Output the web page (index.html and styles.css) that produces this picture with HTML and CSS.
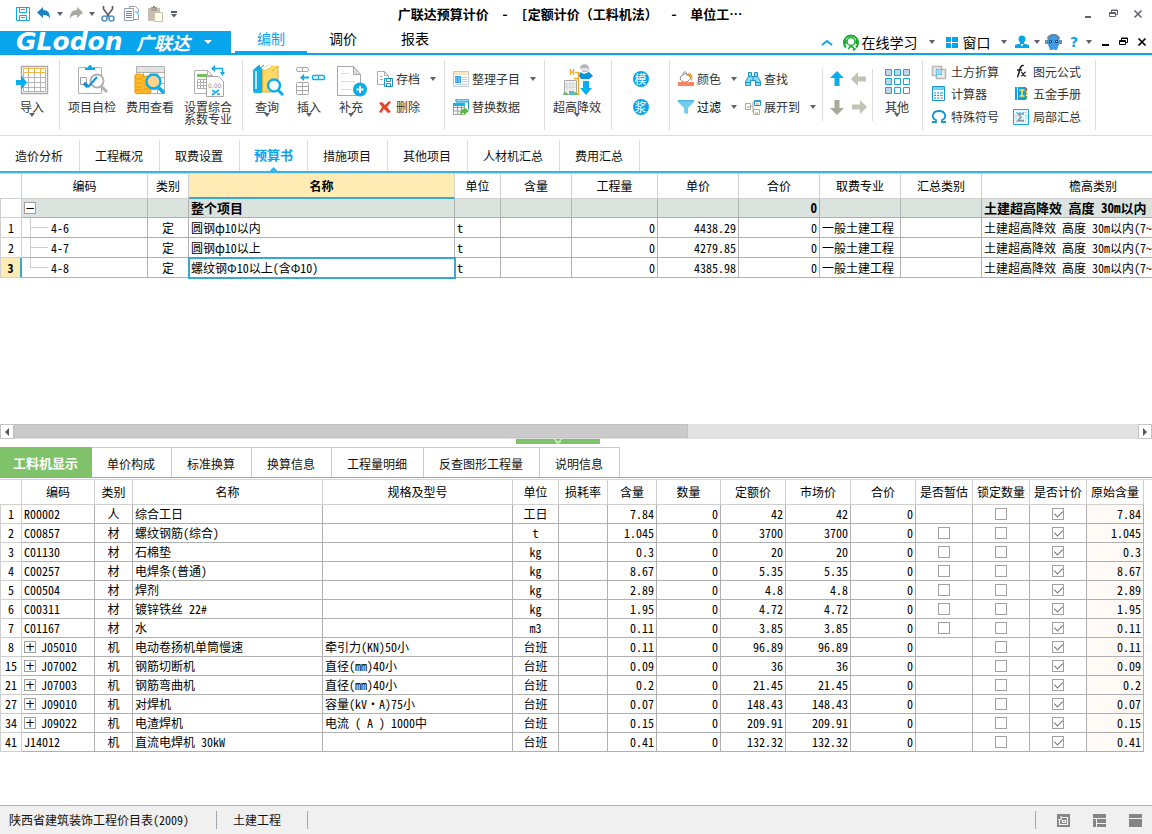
FILE: index.html
```html
<!DOCTYPE html>
<html lang="zh-CN">
<head>
<meta charset="utf-8">
<title>广联达预算计价</title>
<link rel="stylesheet" href="styles.css">
</head>
<body>
<header class="titlebar">
  <div class="quick">
    <button aria-label="保存"><svg width="16" height="16" viewBox="0 0 16 16" fill="none" stroke="#12a9e0"><path d="M1.500 1.500h13v13h-13z"/><path d="M4.500 1.500v5h7v-5M4.500 14.500v-5h7v5M6 11.500h4M6 3.500h4"/></svg></button>
    <button aria-label="撤销"><svg width="14" height="14" viewBox="0 0 14 14"><path d="M6 0v3c5 0 7 3 7 9-1-3-3-4-7-4v3L0 5.500z" fill="#1a84c8"/></svg></button>
    <button aria-label="撤销列表"><i class="caret"></i></button>
    <button aria-label="重做"><svg width="14" height="14" viewBox="0 0 14 14"><path d="M8 0v3C3 3 1 6 1 12c1-3 3-4 7-4v3l6-5.500z" fill="#a9a9a0"/></svg></button>
    <button aria-label="重做列表"><i class="caret"></i></button>
    <button aria-label="剪切"><svg width="14" height="16" viewBox="0 0 14 16" fill="none"><path d="M2.500 0v3l6 8M11.500 0v3l-6 8" stroke="#5b5b66" stroke-width="1.600"/><circle cx="3.500" cy="12.500" r="2.500" stroke="#5594c4" stroke-width="1.600"/><circle cx="10.500" cy="12.500" r="2.500" stroke="#5594c4" stroke-width="1.600"/></svg></button>
    <button aria-label="复制"><svg width="16" height="16" viewBox="0 0 16 16" fill="#fff"><path d="M5.500.5h6l3 3v10h-9z" stroke="#9d9d9d"/><path d="M.5 2.500h9v12h-9z" stroke="#8fa3ad"/><path d="M2 5.500h6M2 7.500h6M2 9.500h6M2 11.500h6" stroke="#12a9e0"/><path d="M10 5h5v5z" fill="#8cd8f2"/></svg></button>
    <button aria-label="粘贴"><svg width="16" height="16" viewBox="0 0 16 16"><path d="M0 2h12v13H0z" fill="#c6bfb2"/><path d="M3 1h6v4H3z" fill="#a9a398"/><path d="M5 0h2v2H5z" fill="#8d887e"/><path d="M6.500 6.500h8v9h-8z" fill="#fffdf0" stroke="#c9c3a4"/></svg></button>
    <button aria-label="更多"><svg width="6" height="8" viewBox="0 0 6 8" fill="#5a5a66"><path d="M0 1h6v2H0zM0 4h6L3 7.500z"/></svg></button>
  </div>
  <h1 class="title">广联达预算计价&nbsp; - &nbsp;[定额计价（工料机法）&nbsp; - &nbsp;单位工…</h1>
  <div class="winbtns">
    <button aria-label="最小化"><svg width="12" height="12" viewBox="0 0 12 12"><path d="M3 8h6v2H3z" fill="#62626e"/></svg></button>
    <button aria-label="还原"><svg width="10" height="10" viewBox="0 0 10 10" fill="none" stroke="#62626e"><path d="M2.500 3V1h6v4.500H7M2.500 1.500h6M.5 3.500h6v4h-6zM.5 4.500h6"/></svg></button>
    <button aria-label="关闭"><svg width="10" height="10" viewBox="0 0 10 10"><path d="M1.500 1.500l7 7M8.500 1.500l-7 7" stroke="#62626e" stroke-width="1.600"/></svg></button>
  </div>
</header>

<nav class="menubar">
  <button class="brand"><span class="wordmark">GLodon</span><span class="brandcn">广联达</span><svg width="8" height="4" viewBox="0 0 8 4"><path d="M0 0h8L4 4z" fill="#fff"/></svg></button>
  <div class="menus"><button class="menu on">编制</button><button class="menu">调价</button><button class="menu">报表</button></div>
  <div class="tools">
    <button aria-label="收起"><svg width="12" height="7" viewBox="0 0 12 7"><path d="M1 6l5-4 5 4" fill="none" stroke="#12a9e0" stroke-width="2"/></svg></button>
    <button class="study"><svg width="16" height="17" viewBox="0 0 16 17" fill="none" stroke="#18ab30"><path d="M3 13.500A7 7 0 1 1 13 13.500" stroke-width="2"/><circle cx="8" cy="7.500" r="4" stroke-width="1.500"/><path d="M2.500 6v4M13.500 6v4" stroke-width="2"/><path d="M5 15l3-3 4 3-2 1.500" stroke-width="1.600"/></svg>在线学习</button>
    <button aria-label="学习列表"><i class="caret"></i></button>
    <button class="study windows"><svg width="12" height="12" viewBox="0 0 12 12"><path d="M0 1h5v5H0zM6 1h6v5H6zM0 7h5v5H0zM6 7h6v5H6z" fill="#08a5ec"/></svg>窗口</button>
    <button aria-label="窗口列表"><i class="caret"></i></button>
    <button aria-label="用户"><svg width="14" height="14" viewBox="0 0 14 14" fill="#08a5ec"><circle cx="7" cy="4" r="3.500"/><path d="M5 7h4v2H5zM0 13v-3l5-1.500 2 3 2-3 5 1.500v3z"/></svg></button>
    <button aria-label="用户列表"><i class="caret"></i></button>
    <button aria-label="助手"><svg width="17" height="17" viewBox="0 0 17 17"><circle cx="8.500" cy="7.500" r="6.500" fill="#3b9be6"/><path d="M0 6h3v4H0zM14 6h3v4h-3z" fill="#7b8794"/><path d="M2.500 4.500c3-5 9-5 12 0" stroke="#6f8291" stroke-width="2" fill="none"/><path d="M3 10h11l-2 6H9.500l-1-1-1 1H5z" fill="#3b9be6"/><circle cx="5.500" cy="7.500" r="1.500" fill="#16324f"/><circle cx="11.500" cy="7.500" r="1.500" fill="#16324f"/><path d="M5 7h1v1H5zM11 7h1v1h-1z" fill="#cfeaff"/></svg></button>
    <button class="help" aria-label="帮助">?</button>
    <button aria-label="帮助列表"><i class="caret"></i></button>
    <button aria-label="最小化文档"><svg width="12" height="12" viewBox="0 0 12 12"><path d="M3 8h7v2H3z"/></svg></button>
    <button aria-label="还原文档"><svg width="10" height="10" viewBox="0 0 10 10" fill="none" stroke="#000"><path d="M2.500 3V1h6v4.500H7M2.500 1.500h6M.5 3.500h6v4h-6zM.5 4.500h6"/></svg></button>
    <button aria-label="关闭文档"><svg width="10" height="10" viewBox="0 0 10 10"><path d="M1.500 1.500l7 7M8.500 1.500l-7 7" stroke="#000" stroke-width="1.700"/></svg></button>
  </div>
</nav>

<section class="ribbon">
  <div class="group g-import">
    <button class="big"><svg width="34" height="34" viewBox="0 0 34 34" fill="none"><path d="M6.500 3.500h26v27h-26z" stroke="#a9a9a9" stroke-width="1.400"/><path d="M8.500 14.500h22M8.500 19.500h22M8.500 24.500h22M8.500 9v19.500h22V9M13.500 9v19M19.500 9v19M25.500 9v19" stroke="#b5b5b5"/><path d="M8.500 5.500h22v4h-22zM13.500 5.500v4M19.500 5.500v4M25.500 5.500v4" stroke="#f2b643"/><path d="M1 17h5v-5l6 7.500L6 27v-5H1z" fill="#08aeee"/></svg><span>导入</span><i class="caret"></i></button>
  </div>
  <div class="group g-check">
    <button class="big"><svg width="34" height="34" viewBox="0 0 34 34" fill="none"><path d="M3.500 4.500h23v26h-23z" stroke="#b0b0b0"/><path d="M10 7V5h3c0-4 4-4 4 0h3v2z" fill="#08aeee"/><path d="M5.500 14.500h6v7h-6z" stroke="#a0a0a0"/><circle cx="22" cy="18" r="6.500" fill="#fff" stroke="#b0b0b0" stroke-width="2"/><path d="M26 23l6 6" stroke="#b0b0b0" stroke-width="3"/><path d="M9 20l4 4" stroke="#0795dd" stroke-width="3.500"/><path d="M13 24l9-10" stroke="#0795dd" stroke-width="2"/></svg><span>项目自检</span></button>
    <button class="big"><svg width="34" height="34" viewBox="0 0 34 34" fill="none"><path d="M3.500 3.500h28v27h-28zM3.500 14.500h28M3.500 20.500h28M3.500 26.500h28M10.500 9v21M17.500 9v21M24.500 9v21" stroke="#b0b0b0"/><path d="M4 4h27v5H4z" fill="#e2e2e2"/><path d="M3.500 9.500h28" stroke="#b0b0b0"/><path d="M2 12l4-1 4 1v2l4-1 4 1v15l-4 2-4-1-4 1-4-1z" fill="#ffb92e" stroke="#f29a00"/><path d="M2 16h7M2 20h7M2 24h7M2 27h7M10 18h7M10 22h7M10 26h7" stroke="#f29a00"/><circle cx="20.500" cy="18.500" r="7" fill="#ffd38c" stroke="#08aeee" stroke-width="2.400"/><path d="M25 24l6 6" stroke="#08aeee" stroke-width="3.400"/></svg><span>费用查看</span></button>
    <button class="big"><svg width="34" height="34" viewBox="0 0 34 34" fill="none"><path d="M3.500 7.500h13l5 5v18h-18zM16.500 7.500v5h5" stroke="#b0b0b0"/><path d="M6 11h10v3H6z" fill="#74c256"/><path d="M6.500 16.500h9v9h-9zM6.500 19.500h9M6.500 22.500h9M9.500 16v9M12.500 16v9" stroke="#b0b0b0"/><path d="M15.500 13.500h12l5 5v15h-17z" fill="#fff" stroke="#a9a9a9"/><text x="17" y="25" font-size="6" fill="#8e8e8e" font-family="DejaVu Sans">0.00</text><path d="M21 32l7-5M21 28h3M26 31h3" stroke="#08aeee" stroke-width="1.600"/><path d="M22 5.500h9.500v5" stroke="#08aeee" stroke-width="1.400"/><path d="M24 2v7l-4-3.500zM29 9h5l-2.500 4z" fill="#08aeee"/></svg><span>设置综合<br>系数专业</span></button>
  </div>
  <div class="group g-query">
    <button class="big"><svg width="34" height="34" viewBox="0 0 34 34" fill="none"><path d="M3 7l6-5 3 4v24H4l-1-2z" fill="#10b2ea"/><path d="M6 8v18" stroke="#fff" stroke-width="1.400"/><path d="M5 6l5-4M8 7l6-5" stroke="#3b98b9"/><path d="M12 7l7-5 9 1v26H12z" fill="#ffd867"/><path d="M12 7l7-5M15 8l7-5M12.500 7v22h10M22 8l6-5v15" stroke="#dfaf3a"/><path d="M13 6l6-4 3 1-6 4z" fill="#fff"/><circle cx="24" cy="22.500" r="6" fill="#fff" stroke="#08aeee" stroke-width="2.400"/><path d="M28 27l5 5" stroke="#08aeee" stroke-width="3"/></svg><span>查询</span><i class="caret"></i></button>
    <button class="big"><svg width="34" height="34" viewBox="0 0 34 34" fill="none" stroke="#a9a9a9"><rect x="4.500" y="4.500" width="12" height="4" rx="1.500"/><path d="M10.500 4.500v4"/><rect x="4.500" y="19.500" width="12" height="12" rx="1"/><path d="M4.500 23.500h12M4.500 27.500h12M10.500 19.500v12"/><rect x="20.500" y="12.500" width="12" height="4" rx="1.500" stroke="#08aeee" stroke-width="1.400"/><path d="M26.500 12.500v4" stroke="#08aeee"/><path d="M8 14.500l4-3.500v2.500h5v2h-5V18z" fill="#08aeee" stroke="none"/></svg><span>插入</span><i class="caret"></i></button>
    <button class="big"><svg width="34" height="34" viewBox="0 0 34 34" fill="none"><path d="M3.500 3.500h16l7 8v21h-23zM19.500 3.500v8h7z" stroke="#a9a9a9"/><path d="M20 5v6h6z" fill="#dcdcdc"/><path d="M7 10.500h8M7 18.500h14M7 26.500h10" stroke="#dadada"/><circle cx="26" cy="26.500" r="7" fill="#08aeee"/><path d="M26 23v7M22.500 26.500h7" stroke="#fff" stroke-width="2"/></svg><span>补充</span><i class="caret"></i></button>
    <div class="smalls">
      <button class="small"><svg width="16" height="16" viewBox="0 0 16 16" fill="none"><path d="M7 13.500H.5v-13h7l4 4V7M7.500.5v4h4M3 5.500h2M3 8.500h3" stroke="#a9a9a9"/><path d="M7.500 7.500h8v8h-8zM9.500 8v2.500h4V8M9.500 15v-2.500h4V15" stroke="#1793c4"/></svg><span>存档</span><i class="caret"></i></button>
      <button class="small"><svg width="16" height="16" viewBox="0 0 16 16"><path d="M2 4l3-1 3 3 4-4 2 1-4 5 4 5-3 1-4-4-3 4-2-1 3-5z" fill="#e8452c"/></svg><span>删除</span></button>
    </div>
  </div>
  <div class="group g-arrange">
    <div class="smalls">
      <button class="small"><svg width="16" height="16" viewBox="0 0 16 16" fill="none"><path d="M.5.5h15v15H.5z" stroke="#c4c8cb"/><path d="M1 1h14v3H1z" fill="#f9e6c3"/><path d="M2 5h6v7H2z" fill="#39a5e0"/><path d="M3 6v5M6 6v5" stroke="#8bcdf2"/><path d="M9 6.500h5M9 8.500h5M9 10.500h5M2 13.500h12" stroke="#b9d3e0"/></svg><span>整理子目</span><i class="caret"></i></button>
      <button class="small"><svg width="16" height="16" viewBox="0 0 16 16" fill="none"><path d="M3.500.5h12v10" stroke="#1697ce"/><path d="M3 0h13v3H3z" fill="#8bdcf3" stroke="#1697ce"/><path d="M.5 4.500h11v11H.5zM.5 8.500h11M.5 12h11M4.500 6v9M8.500 6v9" stroke="#9d9d9d"/><path d="M0 4h12v3H0z" fill="#19b3e0"/><path d="M7 15c0-4 2-5 4-5V8l5 4-5 4v-2c-2 0-3 0-4 1z" fill="#5cb944"/></svg><span>替换数据</span></button>
    </div>
  </div>
  <div class="group g-height">
    <button class="big"><svg width="34" height="34" viewBox="0 0 34 34" fill="none"><path d="M10.500 6v6M13.500 6v6M10.500 9h3" stroke="#f5a623" stroke-width="1.300"/><path d="M15 9.500h4M18.500 9v23M14 15.500h5" stroke="#f5a623" stroke-width="1.300"/><path d="M20 5c0-5 9-5 9 0v2c-1 3-7 3-8 0z" fill="#b5b5b5"/><path d="M21 5h7v3h-7z" fill="#e2e2e2"/><path d="M20 9l4 2 5-2 4 4-4 3h-8l-2-3z" fill="#0796da"/><path d="M4.500 17.500h12v14h-12z" fill="#f4f4f4" stroke="#a9a9a9"/><path d="M7 19v9M10 19v9M13 19v9M5 21h11M5 24h11" stroke="#d2d2d2"/><path d="M9 28h5v4H9z" fill="#55b8e4"/><path d="M3 32c0-4 5-4 5 0zM13 32c0-4 5-4 5 0z" fill="#72bd69"/><path d="M23 18h6v7h3l-6 7-6-7h3z" fill="#08aeee"/></svg><span>超高降效</span><i class="caret"></i></button>
  </div>
  <div class="group g-round">
    <div class="smalls"><div class="cell"><button class="round">模</button></div><div class="cell"><button class="round">浆</button></div></div>
  </div>
  <div class="group g-edit">
    <div class="smalls">
      <button class="small"><svg width="16" height="16" viewBox="0 0 16 16" fill="none"><path d="M3 5l5-3 5 5-4 4H5L2 8zM5 4c0-5 4-4 4 1" stroke="#8d8d8d"/><path d="M10 2c4 0 5 3 4 9-1-4-2-5-4-6z" fill="#f39b33"/><path d="M0 11h16v4H0z" fill="#fb8462"/></svg><span>颜色</span><i class="caret"></i></button>
      <button class="small dark"><svg width="16" height="16" viewBox="0 0 16 16"><path d="M0 1h16v2l-6 6v6l-4-1V9L0 3z" fill="#74cdf0"/><path d="M0 1h16v1.500H0z" fill="#4fb9e2"/></svg><span>过滤</span><i class="caret"></i></button>
    </div>
    <div class="smalls">
      <button class="small"><svg width="16" height="16" viewBox="0 0 16 16" fill="#8cd8f2" stroke="#1697ce"><path d="M3.500 1.500h3v4h3v-4h3v4l3 5v4h-5v-5h-5v5h-5v-4l3-5z"/><path d="M3 5.500h3M10 5.500h3M1 11.500h4M11 11.500h4M8 5v4"/></svg><span>查找</span></button>
      <button class="small"><svg width="16" height="16" viewBox="0 0 16 16" fill="#fff"><path d="M5 7h3V3h2M8 7v6h1" fill="none" stroke="#a9a9a9"/><path d="M.5 4.500h5v6h-5zM8.500 10.500h6v5h-6z" stroke="#a9a9a9"/><path d="M9.500 1.500h6v5h-6z" stroke="#24a0d4"/><path d="M10 1h6v2h-6z" fill="#24a0d4"/><path d="M2 7h3v2H2zM11 4h3v2h-3zM10 13h3v2h-3z" fill="#e9c9a2"/></svg><span>展开到</span><i class="caret"></i></button>
    </div>
  </div>
  <div class="group g-arrows">
    <button aria-label="上移"><svg width="14" height="16" viewBox="0 0 14 16"><path d="M7 0l7 7H9.500v8h-5V7H0z" fill="#08aeee"/></svg></button>
    <button aria-label="升级"><svg width="16" height="14" viewBox="0 0 16 14"><path d="M0 7l7-7v4.500h8v5H7V14z" fill="#c3c3b5"/></svg></button>
    <button aria-label="下移"><svg width="14" height="16" viewBox="0 0 14 16"><path d="M7 16l7-7H9.500V1h-5v8H0z" fill="#a9a99b"/></svg></button>
    <button aria-label="降级"><svg width="16" height="14" viewBox="0 0 16 14"><path d="M16 7L9 0v4.500H1v5h8V14z" fill="#c3c3b5"/></svg></button>
  </div>
  <div class="group g-other">
    <button class="big"><svg width="34" height="34" viewBox="0 0 34 34" fill="#fff" stroke="#12a9e0"><path d="M5.500 6.500h6v6h-6zM14.500 6.500h6v6h-6zM23.500 6.500h6v6h-6zM5.500 15.500h6v6h-6z" fill="#bcd8ec"/><path d="M14.500 15.500h6v6h-6zM23.500 15.500h6v6h-6zM14.500 24.500h6v6h-6zM23.500 24.500h6v6h-6z"/><path d="M5.500 24.500h6v6h-6z" fill="#bcd8ec"/></svg><span>其他</span><i class="caret"></i></button>
  </div>
  <div class="group g-utils">
    <button class="util"><svg width="16" height="16" viewBox="0 0 16 16" fill="none"><path d="M1.500 2.500h9v9h-9z" fill="#ececec" stroke="#b9b9b9" stroke-width="1.600"/><path d="M5.500 5.500h9v9h-9z" fill="#ececec" stroke="#b9b9b9" stroke-width="1.600"/><path d="M5 5h6v6H5z" fill="#39b4dd"/><path d="M5 7h6M5 9h6M7 5v6M9 5v6" stroke="#bfe9f7"/></svg>土方折算</button>
    <button class="util"><svg width="16" height="16" viewBox="0 0 16 16"><path d="M4 13c2 0 2-9 4.500-11 1-1 2 0 2 0M4 6h5" fill="none" stroke="#222" stroke-width="1.600"/><path d="M8 8c2 0 2 5 5 4M13 8c-3 0-2 4-5 4" fill="none" stroke="#222" stroke-width="1.200"/></svg>图元公式</button>
    <button class="util"><svg width="16" height="16" viewBox="0 0 16 16"><path d="M1.500.5h12v14h-12z" fill="#f4fbfe" stroke="#1697ce"/><path d="M2 1h11v3H2z" fill="#7fcdee"/><path d="M3 7h2M6 7h2M9 7h3M3 9.500h2M6 9.500h2M3 12h2M6 12h2" stroke="#1697ce"/><path d="M9 9.500h3M9 12h3" stroke="#ec6a52"/></svg>计算器</button>
    <button class="util"><svg width="16" height="16" viewBox="0 0 16 16"><path d="M2 1h11v13H2z" fill="#16a0dc"/><path d="M4.500 1v13" stroke="#c7ebfb"/><path d="M6.500 4h5M9 4v6M6.500 10h5" stroke="#ffe44d" stroke-width="1.600"/><path d="M13 2h1v3h-1z" fill="#e2513d"/><path d="M13 6h1v3h-1z" fill="#efaa2b"/><path d="M13 10h1v3h-1z" fill="#4fb04d"/></svg>五金手册</button>
    <button class="util"><svg width="16" height="16" viewBox="0 0 16 16"><path d="M1 13h4v-2C0 9 1 2 8 2s8 7 3 9v2h4" fill="none" stroke="#1697ce" stroke-width="1.800"/></svg>特殊符号</button>
    <button class="util"><svg width="16" height="16" viewBox="0 0 16 16" fill="none"><path d="M.5.5h15v15H.5z" fill="#eaf7fd" stroke="#12a9e0"/><path d="M3 3.500h10M3 12.500h10M3 6v4M13 6v4" stroke="#6dc9ec" stroke-dasharray="2 1"/><path d="M11 5H5l3 3-3 3.500h6" stroke="#87929a" stroke-width="1.400"/></svg>局部汇总</button>
  </div>
</section>

<nav class="tabs">
  <button>造价分析</button><button>工程概况</button><button>取费设置</button><button class="on">预算书</button><button>措施项目</button><button>其他项目</button><button>人材机汇总</button><button>费用汇总</button>
</nav>

<main class="panes">
<section class="pane upper">
<table class="grid budget">
  <colgroup><col class="w22"><col class="w126"><col class="w41"><col class="w266"><col class="w46"><col class="w71"><col class="w86"><col class="w81"><col class="w81"><col class="w81"><col class="w81"><col class="w223"></colgroup>
  <thead><tr><th></th><th>编码</th><th>类别</th><th class="picked">名称</th><th>单位</th><th>含量</th><th>工程量</th><th>单价</th><th>合价</th><th>取费专业</th><th>汇总类别</th><th>檐高类别</th></tr></thead>
  <tbody>
  <tr class="sum"><td class="no"></td><td><button class="toggle" aria-label="折叠">−</button></td><td></td><td>整个项目</td><td></td><td></td><td></td><td></td><td class="r">0</td><td></td><td></td><td>土建超高降效 高度 30m以内</td></tr>
  <tr><td class="no">1</td><td><div class="node"><i class="branch"></i>4-6</div></td><td class="c">定</td><td>圆钢ф10以内</td><td>t</td><td></td><td class="r">0</td><td class="r">4438.29</td><td class="r">0</td><td>一般土建工程</td><td></td><td>土建超高降效 高度 30m以内(7~</td></tr>
  <tr><td class="no">2</td><td><div class="node"><i class="branch"></i>4-7</div></td><td class="c">定</td><td>圆钢ф10以上</td><td>t</td><td></td><td class="r">0</td><td class="r">4279.85</td><td class="r">0</td><td>一般土建工程</td><td></td><td>土建超高降效 高度 30m以内(7~</td></tr>
  <tr><td class="no cur">3</td><td><div class="node"><i class="branch last"></i>4-8</div></td><td class="c">定</td><td class="active">螺纹钢Φ10以上(含Φ10)</td><td>t</td><td></td><td class="r">0</td><td class="r">4385.98</td><td class="r">0</td><td>一般土建工程</td><td></td><td>土建超高降效 高度 30m以内(7~</td></tr>
  </tbody>
</table>
</section>

<div class="hscroll">
  <button aria-label="向左滚动"><svg width="4" height="8" viewBox="0 0 4 8"><path d="M4 0v8L0 4z" fill="#55555f"/></svg></button>
  <div class="track"><div class="thumb"></div></div>
  <button aria-label="向右滚动"><svg width="4" height="8" viewBox="0 0 4 8"><path d="M0 0v8l4-4z" fill="#55555f"/></svg></button>
</div>
<div class="splitter"><button aria-label="收起下方面板"><svg width="10" height="6" viewBox="0 0 10 6" fill="none" stroke="#e6f5e2"><path d="M1 0l4 3 4-3M2 2l3 3 3-3"/></svg></button></div>

<nav class="subtabs">
  <button class="on">工料机显示</button><button>单价构成</button><button>标准换算</button><button>换算信息</button><button>工程量明细</button><button>反查图形工程量</button><button>说明信息</button>
</nav>

<section class="pane lower">
<table class="grid detail">
  <colgroup><col class="w22"><col class="w73"><col class="w38"><col class="w190"><col class="w190"><col class="w46"><col class="w49"><col class="w49"><col class="w64"><col class="w65"><col class="w65"><col class="w65"><col class="w57"><col class="w57"><col class="w57"><col class="w57"></colgroup>
  <thead><tr><th></th><th>编码</th><th>类别</th><th>名称</th><th>规格及型号</th><th>单位</th><th>损耗率</th><th>含量</th><th>数量</th><th>定额价</th><th>市场价</th><th>合价</th><th>是否暂估</th><th>锁定数量</th><th>是否计价</th><th>原始含量</th></tr></thead>
  <tbody>
  <tr><td class="no">1</td><td>R00002</td><td class="c">人</td><td>综合工日</td><td></td><td class="c">工日</td><td></td><td class="r">7.84</td><td class="r">0</td><td class="r">42</td><td class="r">42</td><td class="r">0</td><td></td><td class="c"><input type="checkbox" aria-label="锁定数量"></td><td class="c"><input type="checkbox" aria-label="是否计价" checked></td><td class="r orig">7.84</td></tr>
  <tr><td class="no">2</td><td>C00857</td><td class="c">材</td><td>螺纹钢筋(综合)</td><td></td><td class="c">t</td><td></td><td class="r">1.045</td><td class="r">0</td><td class="r">3700</td><td class="r">3700</td><td class="r">0</td><td class="c"><input type="checkbox" aria-label="是否暂估"></td><td class="c"><input type="checkbox" aria-label="锁定数量"></td><td class="c"><input type="checkbox" aria-label="是否计价" checked></td><td class="r orig">1.045</td></tr>
  <tr><td class="no">3</td><td>C01130</td><td class="c">材</td><td>石棉垫</td><td></td><td class="c">kg</td><td></td><td class="r">0.3</td><td class="r">0</td><td class="r">20</td><td class="r">20</td><td class="r">0</td><td class="c"><input type="checkbox" aria-label="是否暂估"></td><td class="c"><input type="checkbox" aria-label="锁定数量"></td><td class="c"><input type="checkbox" aria-label="是否计价" checked></td><td class="r orig">0.3</td></tr>
  <tr><td class="no">4</td><td>C00257</td><td class="c">材</td><td>电焊条(普通)</td><td></td><td class="c">kg</td><td></td><td class="r">8.67</td><td class="r">0</td><td class="r">5.35</td><td class="r">5.35</td><td class="r">0</td><td class="c"><input type="checkbox" aria-label="是否暂估"></td><td class="c"><input type="checkbox" aria-label="锁定数量"></td><td class="c"><input type="checkbox" aria-label="是否计价" checked></td><td class="r orig">8.67</td></tr>
  <tr><td class="no">5</td><td>C00504</td><td class="c">材</td><td>焊剂</td><td></td><td class="c">kg</td><td></td><td class="r">2.89</td><td class="r">0</td><td class="r">4.8</td><td class="r">4.8</td><td class="r">0</td><td class="c"><input type="checkbox" aria-label="是否暂估"></td><td class="c"><input type="checkbox" aria-label="锁定数量"></td><td class="c"><input type="checkbox" aria-label="是否计价" checked></td><td class="r orig">2.89</td></tr>
  <tr><td class="no">6</td><td>C00311</td><td class="c">材</td><td>镀锌铁丝 22#</td><td></td><td class="c">kg</td><td></td><td class="r">1.95</td><td class="r">0</td><td class="r">4.72</td><td class="r">4.72</td><td class="r">0</td><td class="c"><input type="checkbox" aria-label="是否暂估"></td><td class="c"><input type="checkbox" aria-label="锁定数量"></td><td class="c"><input type="checkbox" aria-label="是否计价" checked></td><td class="r orig">1.95</td></tr>
  <tr><td class="no">7</td><td>C01167</td><td class="c">材</td><td>水</td><td></td><td class="c">m3</td><td></td><td class="r">0.11</td><td class="r">0</td><td class="r">3.85</td><td class="r">3.85</td><td class="r">0</td><td class="c"><input type="checkbox" aria-label="是否暂估"></td><td class="c"><input type="checkbox" aria-label="锁定数量"></td><td class="c"><input type="checkbox" aria-label="是否计价" checked></td><td class="r orig">0.11</td></tr>
  <tr><td class="no">8</td><td><div class="node"><button class="toggle" aria-label="展开">+</button>J05010</div></td><td class="c">机</td><td>电动卷扬机单筒慢速</td><td>牵引力(KN)50小</td><td class="c">台班</td><td></td><td class="r">0.11</td><td class="r">0</td><td class="r">96.89</td><td class="r">96.89</td><td class="r">0</td><td></td><td class="c"><input type="checkbox" aria-label="锁定数量"></td><td class="c"><input type="checkbox" aria-label="是否计价" checked></td><td class="r orig">0.11</td></tr>
  <tr><td class="no">15</td><td><div class="node"><button class="toggle" aria-label="展开">+</button>J07002</div></td><td class="c">机</td><td>钢筋切断机</td><td>直径(mm)40小</td><td class="c">台班</td><td></td><td class="r">0.09</td><td class="r">0</td><td class="r">36</td><td class="r">36</td><td class="r">0</td><td></td><td class="c"><input type="checkbox" aria-label="锁定数量"></td><td class="c"><input type="checkbox" aria-label="是否计价" checked></td><td class="r orig">0.09</td></tr>
  <tr><td class="no">21</td><td><div class="node"><button class="toggle" aria-label="展开">+</button>J07003</div></td><td class="c">机</td><td>钢筋弯曲机</td><td>直径(mm)40小</td><td class="c">台班</td><td></td><td class="r">0.2</td><td class="r">0</td><td class="r">21.45</td><td class="r">21.45</td><td class="r">0</td><td></td><td class="c"><input type="checkbox" aria-label="锁定数量"></td><td class="c"><input type="checkbox" aria-label="是否计价" checked></td><td class="r orig">0.2</td></tr>
  <tr><td class="no">27</td><td><div class="node"><button class="toggle" aria-label="展开">+</button>J09010</div></td><td class="c">机</td><td>对焊机</td><td>容量(kV·A)75小</td><td class="c">台班</td><td></td><td class="r">0.07</td><td class="r">0</td><td class="r">148.43</td><td class="r">148.43</td><td class="r">0</td><td></td><td class="c"><input type="checkbox" aria-label="锁定数量"></td><td class="c"><input type="checkbox" aria-label="是否计价" checked></td><td class="r orig">0.07</td></tr>
  <tr><td class="no">34</td><td><div class="node"><button class="toggle" aria-label="展开">+</button>J09022</div></td><td class="c">机</td><td>电渣焊机</td><td>电流 ( A ) 1000中</td><td class="c">台班</td><td></td><td class="r">0.15</td><td class="r">0</td><td class="r">209.91</td><td class="r">209.91</td><td class="r">0</td><td></td><td class="c"><input type="checkbox" aria-label="锁定数量"></td><td class="c"><input type="checkbox" aria-label="是否计价" checked></td><td class="r orig">0.15</td></tr>
  <tr><td class="no">41</td><td>J14012</td><td class="c">机</td><td>直流电焊机 30kW</td><td></td><td class="c">台班</td><td></td><td class="r">0.41</td><td class="r">0</td><td class="r">132.32</td><td class="r">132.32</td><td class="r">0</td><td></td><td class="c"><input type="checkbox" aria-label="锁定数量"></td><td class="c"><input type="checkbox" aria-label="是否计价" checked></td><td class="r orig">0.41</td></tr>
  </tbody>
</table>
</section>
</main>

<footer class="status">
  <span class="item book">陕西省建筑装饰工程价目表(2009)</span><span class="item">土建工程</span>
  <div class="views">
    <button aria-label="单窗视图"><svg width="13" height="13" viewBox="0 0 13 13"><path d="M0 0h13v13H0z" fill="#858585"/><path d="M4 3.500h6.500v7h-8V6M4 2v3.500H1M5.500 6.500h3v2h-3z" fill="none" stroke="#f0f0f0" stroke-width="1.200"/></svg></button>
    <button aria-label="分栏视图"><svg width="13" height="13" viewBox="0 0 13 13" fill="#858585"><path d="M0 0h13v4H0zM0 5h3v8H0zM4 5h9v4H4zM4 10h9v3H4z"/></svg></button>
    <button aria-label="上下视图"><svg width="13" height="13" viewBox="0 0 13 13" fill="#858585"><path d="M0 0h13v4H0zM0 5h13v8H0z"/></svg></button>
  </div>
</footer>
</body>
</html>
```
FILE: styles.css
```css
* { box-sizing: border-box; }
body {
  margin: 0;
  height: 100vh;
  display: flex;
  flex-direction: column;
  overflow: hidden;
  background: #fff;
  color: #000;
  font: 12px/18px "Noto Sans Mono CJK SC", "Noto Sans CJK SC", sans-serif;
}
button {
  font: inherit;
  color: inherit;
  background: none;
  border: 0;
  padding: 0;
  margin: 0;
  white-space: nowrap;
}
svg { display: block; flex: none; }
.caret {
  flex: none;
  width: 6px;
  height: 4px;
  background: #5f6070;
  clip-path: polygon(0 0, 100% 0, 50% 100%);
}

/* title bar */
.titlebar {
  flex: none;
  height: 31px;
  display: grid;
  grid-template-columns: 1fr auto 1fr;
  padding-bottom: 5px;
}
.titlebar button, .tools button { display: flex; align-items: center; justify-content: center; }
.quick { display: grid; grid-template-columns: 18px 24px 8px 24px 8px 24px 24px 24px 12px; padding-left: 14px; }
.title { margin: 0; padding-right: 12px; font-size: 13px; line-height: 28px; font-weight: bold; }
.winbtns { display: grid; grid-template-columns: 26px 26px 22px; justify-content: end; padding-right: 3px; }

/* menu bar */
.menubar { flex: none; height: 24px; display: flex; border-bottom: 2px solid #08a5ec; }
.brand {
  width: 231px;
  padding-left: 16px;
  background: #08a5ec;
  color: #fff;
  display: flex;
  align-items: center;
  text-align: left;
}
.wordmark { width: 120px; font: italic bold 25px/24px "DejaVu Sans", sans-serif; }
.brandcn { width: 68px; font-size: 18px; line-height: 24px; font-weight: bold; font-style: italic; }
.menus { display: flex; margin-left: 4px; }
.menu { width: 72px; height: 22px; padding-bottom: 8px; font-size: 14px; line-height: 14px; }
.menu.on { color: #08a5ec; border-bottom: 2px solid #08a5ec; padding-bottom: 8px; }
.tools {
  margin-left: auto;
  display: grid;
  grid-template-columns: 18px 88px 16px 56px 16px 20px 10px 22px 20px 10px 22px 16px 20px;
}
.tools .study { font-size: 14px; line-height: 20px; gap: 3px; }
.tools .windows { gap: 5px; }
.tools .help { color: #08a5ec; font: bold 14px/20px "DejaVu Sans", sans-serif; }

/* ribbon */
.ribbon { flex: none; height: 81px; display: flex; padding: 5px 0; border-bottom: 1px solid #dcdcdc; color: #333; }
.group { display: flex; border-right: 1px solid #dcdcdc; }
.big {
  width: 42px;
  padding-top: 3px;
  display: flex;
  flex-direction: column;
  align-items: center;
  line-height: 12px;
}
.big span { margin-top: 4px; }
.g-import { width: 60px; padding-left: 11px; }
.g-check { width: 183px; padding-left: 3px; }
.g-check .big, .g-height .big { width: 58px; }
.g-query { width: 202px; padding-left: 3px; }
.g-query .smalls { margin-left: 5px; width: 59px; }
.g-arrange { width: 100px; padding: 0 8px; }
.g-arrange .smalls { width: 83px; }
.g-height { width: 67px; padding-left: 3px; }
.g-round { width: 58px; justify-content: center; }
.g-edit { width: 153px; padding-left: 8px; gap: 8px; border-right: 0; }
.g-edit .smalls { width: 59px; }
.g-edit .smalls + .smalls { width: 71px; }
.smalls { display: grid; grid-template-rows: 28px 28px; align-content: start; padding-top: 5px; }
.small { display: flex; align-items: center; gap: 3px; text-align: left; }
.small .caret { margin-left: auto; }
.small.dark { color: #000; }
.cell { display: flex; align-items: center; }
.round { width: 16px; height: 16px; border-radius: 8px; background: #08a5ec; color: #fff; line-height: 16px; display: flex; justify-content: center; }
.g-arrows {
  width: 51px;
  margin: 9px 0 9px -1px;
  padding: 0 3px;
  border-left: 1px solid #dcdcdc;
  display: grid;
  grid-template-columns: 22px 22px;
  grid-template-rows: 20px 36px;
}
.g-arrows button { display: flex; align-items: center; justify-content: center; }
.g-other { width: 50px; padding-left: 3px; }
.g-utils {
  width: 173px;
  padding-left: 8px;
  display: grid;
  grid-template-columns: 82px 82px;
  grid-template-rows: 23px 22px 23px;
}
.util { display: flex; align-items: center; gap: 4px; }

/* document tabs */
.tabs { flex: none; height: 37px; display: flex; padding-top: 4px; border-bottom: 2px solid #3bb4e4; }
.tabs button { padding: 0 16px 0 15px; border-right: 1px solid #dcdcdc; color: #111; }
.tabs .on { position: relative; padding: 0 14px 2px 14px; font-size: 13px; font-weight: bold; color: #08a5ec; }
.tabs .on::after {
  content: "";
  position: absolute;
  left: 50%;
  bottom: 0;
  margin-left: -4px;
  width: 8px;
  height: 4px;
  background: #3bb4e4;
  clip-path: polygon(50% 0, 100% 100%, 0 100%);
}

/* panes */
.panes { flex: 1; min-height: 0; display: flex; flex-direction: column; }
.pane { min-height: 0; overflow: hidden; border-top: 1px solid #d6d6d6; }
.upper { flex: 251 1 0; }
.lower { flex: 326 1 0; margin-top: 1px; }

.grid { table-layout: fixed; border-collapse: separate; border-spacing: 0; }
.budget { width: 1205px; }
.detail { width: 1144px; }
.w22 { width: 22px; }
.w38 { width: 38px; }
.w41 { width: 41px; }
.w46 { width: 46px; }
.w49 { width: 49px; }
.w57 { width: 57px; }
.w64 { width: 64px; }
.w65 { width: 65px; }
.w71 { width: 71px; }
.w73 { width: 73px; }
.w81 { width: 81px; }
.w86 { width: 86px; }
.w126 { width: 126px; }
.w190 { width: 190px; }
.w223 { width: 223px; }
.w266 { width: 266px; }
.grid th { height: 25px; padding: 0; font-weight: normal; white-space: nowrap; border-right: 1px solid #cfcfcf; border-bottom: 1px solid #cfcfcf; }
.grid td {
  height: 19px;
  padding: 0 2px;
  line-height: 18px;
  white-space: nowrap;
  overflow: hidden;
  border-right: 1px solid #b0b0b0;
  border-bottom: 1px solid #b0b0b0;
}
.budget tr + tr td { height: 20px; }
.grid .no { padding: 0; text-align: center; border-color: #d0d0d0; border-left: 1px solid #d0d0d0; }
.grid .c { text-align: center; padding: 0; }
.grid .r { text-align: right; padding: 0 2px; }
.grid .orig { background: #fffaf5; }
.grid .picked { background: #feecb4; font-weight: bold; border-bottom: 2px solid #35a8d6; }
.grid .cur { background: #feecb4; font-weight: bold; border-right: 2px solid #35a8d6; }
.grid .active { outline: 2px solid #35a8d6; outline-offset: -1px; }
.grid .sum td { background: #dbe3df; font-weight: bold; font-size: 13px; }
.grid .sum .no { background: #fff; }
.node { display: flex; align-items: center; height: 18px; }
.budget .node { height: 19px; }
.branch {
  flex: none;
  width: 18px;
  height: 19px;
  margin: 0 3px 0 6px;
  background:
    linear-gradient(#cfcfcf, #cfcfcf) 0 0 / 1px 100% no-repeat,
    linear-gradient(#cfcfcf, #cfcfcf) 0 9px / 100% 1px no-repeat;
}
.branch.last {
  background:
    linear-gradient(#cfcfcf, #cfcfcf) 0 0 / 1px 10px no-repeat,
    linear-gradient(#cfcfcf, #cfcfcf) 0 9px / 100% 1px no-repeat;
}
.toggle {
  flex: none;
  display: flex;
  align-items: center;
  justify-content: center;
  width: 12px;
  height: 12px;
  border: 1px solid #a0a0a0;
  background: #fff;
  font: 12px/10px "DejaVu Sans", sans-serif;
}
.node .toggle { margin-right: 5px; }
input[type="checkbox"] {
  appearance: none;
  display: block;
  width: 12px;
  height: 12px;
  margin: 0 auto;
  border: 1px solid #a0a0a0;
  background: #fff;
}
input[type="checkbox"]:checked::after {
  content: "";
  display: block;
  width: 4px;
  height: 7px;
  margin: 0 3px;
  border: solid #6b6b78;
  border-width: 0 1px 1px 0;
  transform: rotate(45deg);
}

/* scroll bar and splitter */
.hscroll { flex: none; height: 15px; display: flex; background: #e1e1e1; }
.hscroll button { width: 14px; border: 1px solid #c4c4c4; background: #fff; display: flex; align-items: center; justify-content: center; }
.track { flex: 1; }
.thumb { width: 60%; height: 14px; background: #cbcbcb; border: 1px solid #c2c2c2; }
.splitter { flex: none; height: 8px; display: flex; justify-content: center; padding-right: 36px; }
.splitter button { width: 84px; height: 5px; background: #80c269; display: flex; justify-content: center; }

/* detail tabs */
.subtabs { flex: none; height: 31px; display: flex; border-bottom: 1px solid #7cc669; }
.subtabs button { padding: 3px 16px 0 15px; border: solid #b3e09f; border-width: 1px 1px 0 0; color: #111; }
.subtabs .on { padding: 0 13px; font-size: 13px; font-weight: bold; background: #80c269; color: #fff; border-color: #80c269; }

/* status bar */
.status { flex: none; height: 29px; display: flex; align-items: center; background: #f0f0f0; border-top: 1px solid #b0b0b0; color: #111; }
.item { padding: 0 26px 0 16px; border-right: 1px solid #a0a8b4; }
.book { padding: 0 27px 0 9px; }
.views { margin-left: auto; display: flex; align-items: center; gap: 23px; height: 18px; padding: 0 10px 0 21px; border-left: 1px solid #a0a8b4; }
```
